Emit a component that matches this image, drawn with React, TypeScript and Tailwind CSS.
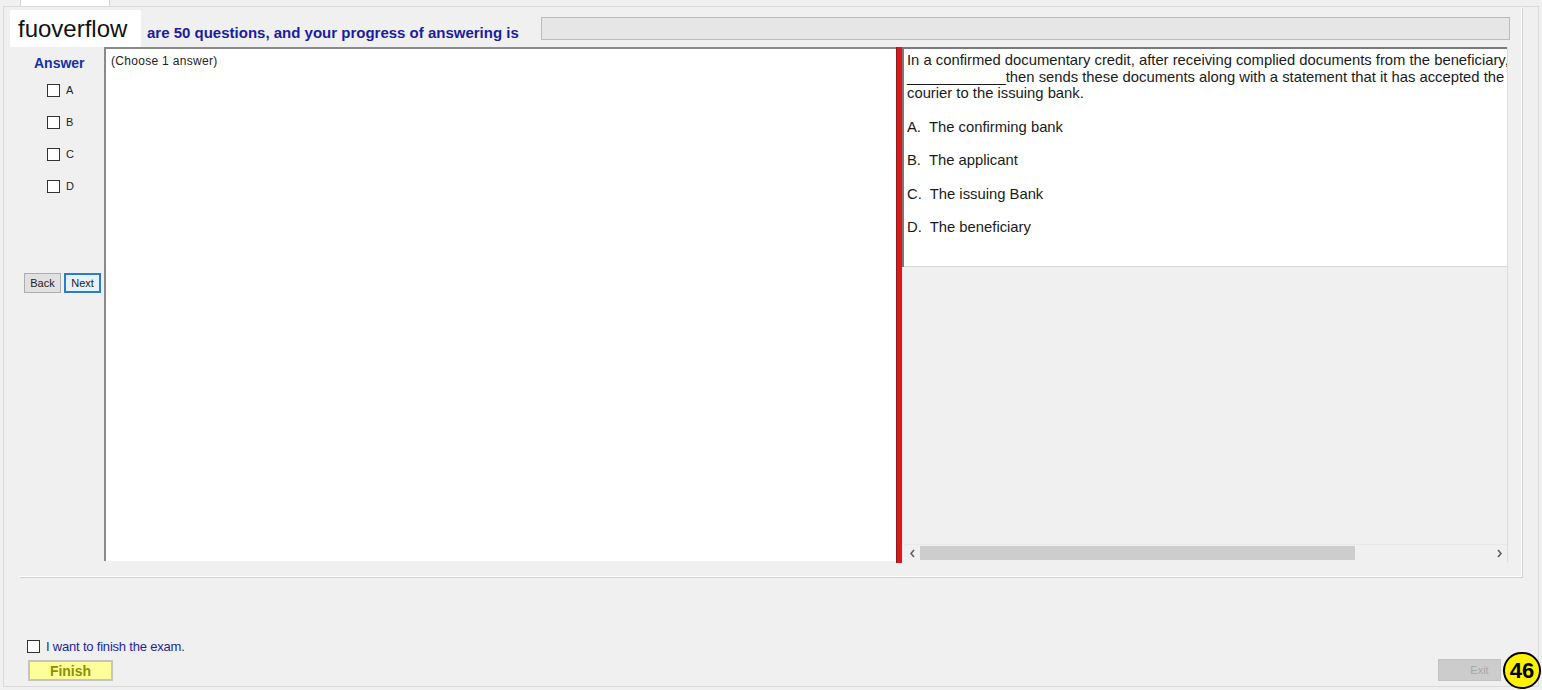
import React from 'react';

const Box: React.FC = () => (
  <div className="w-[13px] h-[13px] border border-[#333333] bg-white shrink-0" />
);

const options = ['A', 'B', 'C', 'D'];

export default function App() {
  return (
    <div className="relative w-[1542px] h-[690px] overflow-hidden bg-[#f0f0f0] font-['Liberation_Sans',Arial,sans-serif] text-black flex flex-col">
      {/* tab strip */}
      <div className="h-[6px] pl-[20px] shrink-0">
        <div className="w-[90px] h-[6px] bg-white border-x border-[#d4d4d4]" />
      </div>

      {/* tab page */}
      <div className="flex-1 mx-[3px] mb-[3px] border border-[#dadada] flex flex-col">
        {/* group box */}
        <div className="ml-[15px] w-[1503px] h-[570px] shrink-0 border-r border-b border-white shadow-[1px_1px_0_#d2d2d2] flex flex-col">
          {/* header */}
          <div className="h-[40px] flex items-start shrink-0">
            <div className="ml-[128px] mt-[17px] text-[15px] leading-[17px] font-bold text-[#1c1ca0] whitespace-nowrap">
              are 50 questions, and your progress of answering is
            </div>
            <div className="ml-auto mr-[11px] mt-[10px] w-[969px] h-[23px] border border-[#bcbcbc] bg-[#e6e6e6]" />
          </div>

          {/* main row */}
          <div className="ml-[5px] h-[516px] flex">
            {/* answer column */}
            <div className="w-[80px] flex flex-col">
              <div className="mt-[8px] h-[16px] pl-[10px] text-[14px] leading-[16px] font-bold text-[#1630a8]">
                Answer
              </div>
              <div className="pt-[9px] flex flex-col">
                {options.map((o) => (
                  <div key={o} className="h-[32px] pt-[4px] pl-[23px] flex items-start gap-[6px]">
                    <Box />
                    <span className="text-[11px] leading-[12px] text-[#222222]">{o}</span>
                  </div>
                ))}
              </div>
              <div className="mt-[65px] flex gap-[3px]">
                <button className="w-[37px] h-[20px] bg-[#e1e1e1] border border-[#adadad] text-[11px] leading-[18px] text-[#222222]">
                  Back
                </button>
                <button className="w-[37px] h-[20px] bg-[#e5f1fb] border-2 border-[#2b7cc9] text-[11px] leading-[16px] text-[#222222]">
                  Next
                </button>
              </div>
            </div>

            {/* middle panel */}
            <div className="w-[792px] h-[514px] bg-white border-l-2 border-t-2 border-[#8a8a8a] pl-[5px] pt-[5px] text-[12px] leading-[14px] tracking-[0.3px] text-[#222222]">
              (Choose 1 answer)
            </div>

            {/* splitter */}
            <div className="w-[6px] h-[516px] bg-[#dc1818] border-l border-[#8b1a1a]" />

            {/* right panel */}
            <div className="w-[606px] h-[515px] flex flex-col border-r border-[#dcdcdc]">
              <div className="h-[220px] border-t-2 border-l-2 border-[#7a7a7a] bg-white flex flex-col">
                <div className="flex-1 overflow-hidden pl-[3px] pt-[3px] text-[14.8px] leading-[16.5px] text-[#1a1a1a] border-b border-[#d8d8d8] whitespace-nowrap">
                  <div>In a confirmed documentary credit, after receiving complied documents from the beneficiary, the confirming bank checks them and</div>
                  <div>____________then sends these documents along with a statement that it has accepted the documents by</div>
                  <div>courier to the issuing bank.</div>
                  <div className="mt-[17px] whitespace-pre">A.  The confirming bank</div>
                  <div className="mt-[17px] whitespace-pre">B.  The applicant</div>
                  <div className="mt-[17px] whitespace-pre">C.  The issuing Bank</div>
                  <div className="mt-[17px] whitespace-pre">D.  The beneficiary</div>
                </div>
              </div>
              <div className="flex-1 border-l border-[#e4e4e4]" />
              {/* horizontal scrollbar */}
              <div className="h-[17px] ml-[2px] mb-[1px] flex items-stretch bg-[#f0f0f0] border-t border-[#e8e8e8]">
                <div className="w-[16px] flex items-center justify-center">
                  <svg width="7" height="9" viewBox="0 0 7 9">
                    <path d="M5 1 L2 4.5 L5 8" fill="none" stroke="#606060" strokeWidth="1.6" />
                  </svg>
                </div>
                <div className="w-[435px] bg-[#cdcdcd] my-[1px]" />
                <div className="flex-1" />
                <div className="w-[16px] flex items-center justify-center">
                  <svg width="7" height="9" viewBox="0 0 7 9">
                    <path d="M2 1 L5 4.5 L2 8" fill="none" stroke="#606060" strokeWidth="1.6" />
                  </svg>
                </div>
              </div>
            </div>
          </div>
        </div>

        {/* bottom area */}
        <div className="flex-1 flex items-end justify-between pb-[5px]">
          <div className="ml-[23px] flex flex-col gap-[6px]">
            <div className="flex items-center gap-[6px]">
              <Box />
              <span className="text-[13px] leading-[15px] text-[#1f1f9e] tracking-[-0.2px]">I want to finish the exam.</span>
            </div>
            <button className="ml-[1px] w-[85px] h-[21px] bg-[#ffff99] border-2 border-[#c4c4c4] text-[14px] leading-[16px] font-bold text-[#8f8f00]">
              Finish
            </button>
          </div>
          <button className="mr-[37px] w-[63px] h-[22px] bg-[#cccccc] border border-[#c2c2c2] text-[11px] leading-[20px] text-[#a8a8a8] pl-[20px]">
            Exit
          </button>
        </div>
      </div>

      {/* watermark */}
      <div className="absolute left-[10px] top-[10px] w-[131px] h-[37px] bg-white flex items-center pl-[8px] text-[24px] text-[#111111]">
        fuoverflow
      </div>

      {/* badge */}
      <div className="absolute left-[1503px] top-[652px] w-[38px] h-[37px] rounded-full bg-[#fff200] border-2 border-black flex items-center justify-center text-[22px] font-bold text-black leading-none">
        46
      </div>
    </div>
  );
}
